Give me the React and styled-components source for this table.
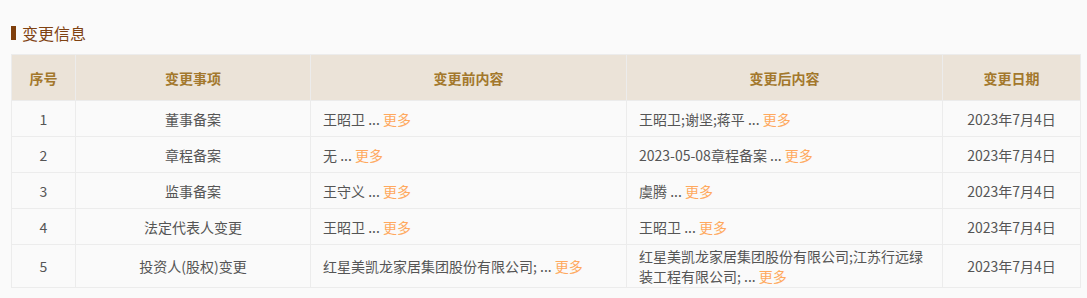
import React from 'react';
import styled, { createGlobalStyle } from 'styled-components';

const GlobalStyle = createGlobalStyle`
    html, body {
        margin: 0;
        padding: 0;
        background: #fafafa;
    }
    body {
        font-family: "Noto Sans CJK SC", "Noto Sans", sans-serif;
        font-size: 14px;
        color: #555;
    }
`

const PageWrapper = styled.div`
    padding: 22px 6px 10px 11px;
`

const TitleWrapper = styled.div`
    display: flex;
    align-items: center;
    gap: 6px;
    height: 22px;
    font-size: 16px;
    color: #7f4212;
    margin-bottom: 10px;
`

const TitleBar = styled.span`
    width: 5px;
    height: 14px;
    background: #7f3f0c;
`

const Table = styled.table`
    width: 100%;
    border-collapse: collapse;
    table-layout: fixed;
    background: #fafafa;
    border: 1px solid #ececec;
`

const HeadCell = styled.th`
    height: 45px;
    padding: 0;
    background: #ebe3d8;
    color: #a3782c;
    font-weight: bold;
    font-size: 14px;
    text-align: center;
    border: 1px solid #ececec;
`

const Cell = styled.td`
    height: 33px;
    padding: 1px 12px;
    line-height: 20px;
    text-align: ${props => props.align || 'center'};
    border: 1px solid #ececec;
    color: #555;
    word-break: break-all;
`

const MoreLink = styled.span`
    color: #ffa95e;
    cursor: pointer;
`

const rows = [
    { id: 1, item: '董事备案', before: '王昭卫', after: '王昭卫;谢坚;蒋平', date: '2023年7月4日' },
    { id: 2, item: '章程备案', before: '无', after: '2023-05-08章程备案', date: '2023年7月4日' },
    { id: 3, item: '监事备案', before: '王守义', after: '虞腾', date: '2023年7月4日' },
    { id: 4, item: '法定代表人变更', before: '王昭卫', after: '王昭卫', date: '2023年7月4日' },
    { id: 5, item: '投资人(股权)变更', before: '红星美凯龙家居集团股份有限公司;', after: '红星美凯龙家居集团股份有限公司;江苏行远绿装工程有限公司;', date: '2023年7月4日' },
]

const Content = ({ text }) => (
    <>
        {text} ... <MoreLink>更多</MoreLink>
    </>
)

export default function App() {
    return (
        <PageWrapper>
            <GlobalStyle />
            <TitleWrapper>
                <TitleBar />
                变更信息
            </TitleWrapper>
            <Table>
                <colgroup>
                    <col style={{ width: 64 }} />
                    <col style={{ width: 235 }} />
                    <col style={{ width: 316 }} />
                    <col style={{ width: 316 }} />
                    <col />
                </colgroup>
                <thead>
                    <tr>
                        <HeadCell>序号</HeadCell>
                        <HeadCell>变更事项</HeadCell>
                        <HeadCell>变更前内容</HeadCell>
                        <HeadCell>变更后内容</HeadCell>
                        <HeadCell>变更日期</HeadCell>
                    </tr>
                </thead>
                <tbody>
                    {rows.map(row => (
                        <tr key={row.id}>
                            <Cell>{row.id}</Cell>
                            <Cell>{row.item}</Cell>
                            <Cell align="left"><Content text={row.before} /></Cell>
                            <Cell align="left"><Content text={row.after} /></Cell>
                            <Cell>{row.date}</Cell>
                        </tr>
                    ))}
                </tbody>
            </Table>
        </PageWrapper>
    )
}
